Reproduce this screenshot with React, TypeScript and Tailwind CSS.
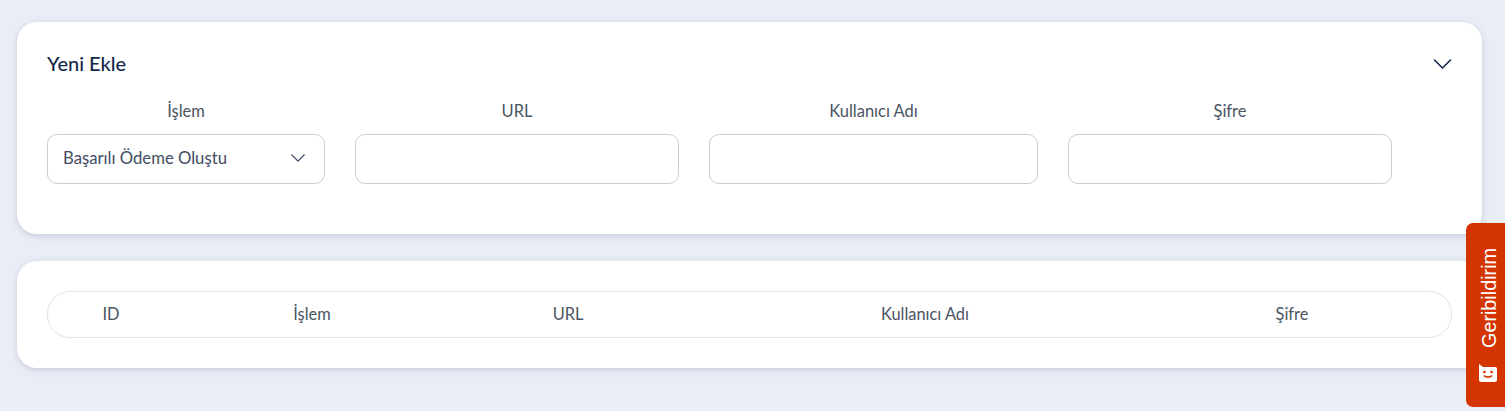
import React from "react";

function Chevron({ className }: { className: string }) {
  return (
    <svg className={className} viewBox="0 0 18 10" fill="none" stroke="currentColor" strokeWidth="1.6" strokeLinecap="round" strokeLinejoin="round">
      <path d="M1 1l8 8 8-8" />
    </svg>
  );
}

export default function App() {
  const labels = ["URL", "Kullanıcı Adı", "Şifre"];
  return (
    <div className="relative h-[411px] w-[1505px] overflow-hidden bg-[#e9edf6] px-[17px] pt-[22px] font-['Lato',sans-serif]">
      <section className="h-[212px] w-[1465px] rounded-[20px] bg-white px-[30px] pt-[30px] shadow-[0_2px_6px_rgba(120,130,160,0.3)]">
        <div className="flex h-[24px] items-center justify-between">
          <h2 className="mb-[2px] text-[20px] font-medium text-[#13294b]">Yeni Ekle</h2>
          <Chevron className="h-[10px] w-[19px] text-[#13294b]" />
        </div>
        <div className="mt-[23px] grid grid-cols-[278px_324px_329px_324px] gap-x-[30px]">
          <div className="flex flex-col">
            <label className="mb-[12px] h-[23px] text-center text-[16.5px] leading-[25px] text-[#4b5563]">İşlem</label>
            <div className="flex h-[50px] items-center justify-between rounded-[10px] border border-[#c5ced9] pl-[15px] pr-[19px] text-[16.7px] text-[#414c63]">
              <span>Başarılı Ödeme Oluştu</span>
              <Chevron className="h-[8px] w-[14px] -translate-y-[1px] text-[#34415c]" />
            </div>
          </div>
          {labels.map((l) => (
            <div key={l} className="flex flex-col">
              <label className="mb-[12px] h-[23px] text-center text-[16.5px] leading-[25px] text-[#4b5563]">{l}</label>
              <input className="h-[50px] rounded-[10px] border border-[#c5ced9] bg-white" />
            </div>
          ))}
        </div>
      </section>
      <section className="mt-[27px] h-[107px] w-[1465px] rounded-[20px] bg-white px-[30px] pt-[30px] shadow-[0_2px_6px_rgba(120,130,160,0.3)]">
        <div className="grid h-[47px] w-[1405px] grid-cols-[126px_276px_236px_478px_256px] items-center rounded-[23px] border border-[#dfe3ea] text-center text-[16.4px] text-[#4b5563]">
          <span>ID</span>
          <span>İşlem</span>
          <span>URL</span>
          <span>Kullanıcı Adı</span>
          <span>Şifre</span>
        </div>
      </section>
      <button className="absolute left-[1466px] top-[223px] flex h-[184px] w-[39px] rotate-180 items-center justify-center gap-[15px] rounded-r-[7px] bg-[#d33400] pr-[6px] text-white [writing-mode:vertical-rl]">
        <svg width="18" height="19" viewBox="0 0 18 19" className="rotate-180">
          <path d="M0 1 L4 4 H16 a2 2 0 0 1 2 2 V17 a2 2 0 0 1-2 2 H2 a2 2 0 0 1-2-2 z" fill="#fff" />
          <circle cx="5.5" cy="9" r="1.3" fill="#d33400" />
          <circle cx="12.5" cy="9" r="1.3" fill="#d33400" />
          <path d="M5 12.5c2 2.2 6 2.2 8 0" stroke="#d33400" strokeWidth="1.6" fill="none" />
        </svg>
        <span className="font-['Liberation_Sans',sans-serif] text-[19.8px] leading-[24px]">Geribildirim</span>
      </button>
    </div>
  );
}
